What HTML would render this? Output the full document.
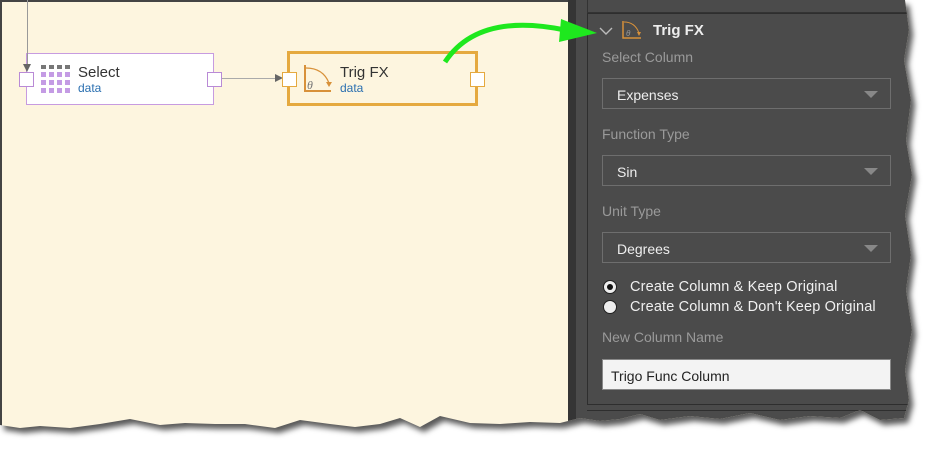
<!DOCTYPE html>
<html><head><meta charset="utf-8"><style>
*{margin:0;padding:0;box-sizing:border-box}
body{width:938px;height:458px;background:#fff;overflow:hidden;font-family:"Liberation Sans",sans-serif;position:relative}
#wrap{position:absolute;left:0;top:0;width:938px;height:458px;filter:drop-shadow(4px 5px 3px rgba(0,0,0,.65))}
#clip{position:absolute;left:0;top:0;width:938px;height:458px;background:#fdf5df;
clip-path:polygon(0 0,905px 0,909px 30px,904px 60px,911px 100px,906px 140px,912px 175px,905px 215px,911px 255px,906px 290px,912px 330px,905px 370px,909px 400px,904px 418px,880px 420px,860px 410px,840px 418px,810px 416px,780px 420px,750px 413px,720px 419px,690px 416px,660px 420px,640px 414px,620px 419px,600px 421px,580px 418px,560px 423px,530px 422px,500px 424px,470px 423px,440px 416px,420px 427px,400px 418px,380px 424px,355px 427px,330px 424px,300px 420px,275px 428px,245px 424px,215px 424px,185px 423px,160px 425px,130px 419px,100px 424px,70px 428px,40px 426px,20px 428px,0 425px)}
.abs{position:absolute}
.lbl{position:absolute;left:602px;color:#9a9a9a;font-size:14px}
.dd{position:absolute;left:602px;width:289px;height:31px;border:1px solid #6e6e6e;color:#eee;font-size:14px;padding:8px 0 0 14px}
.dd:after{content:"";position:absolute;right:12px;top:12px;border-left:7px solid transparent;border-right:7px solid transparent;border-top:7px solid #888}
.rad{position:absolute;left:603px;width:14px;height:14px;border-radius:50%;background:#eee;border:1px solid #222}
.rt{position:absolute;left:630px;color:#f0f0f0;font-size:14.5px;letter-spacing:0.15px}
</style></head><body>
<div id="wrap"><div id="clip">
<div class="abs" style="left:0;top:0;width:2px;height:458px;background:#444"></div>
<div class="abs" style="left:0;top:0;width:568px;height:2px;background:#444"></div>
<div class="abs" style="left:26px;top:53px;width:188px;height:52px;background:#fff;border:1px solid #c79be0"></div>
<div class="abs" style="left:27px;top:0;width:1px;height:64px;background:#999"></div>
<div class="abs" style="left:23px;top:64px;border-left:4px solid transparent;border-right:4px solid transparent;border-top:8px solid #666"></div>
<div class="abs" style="left:220px;top:78px;width:56px;height:1px;background:#aaa"></div>
<div class="abs" style="left:275px;top:74px;border-top:4px solid transparent;border-bottom:4px solid transparent;border-left:8px solid #666"></div>
<div class="abs" style="left:19px;top:72px;width:15px;height:15px;background:#fff;border:1px solid #b98ad6"></div>
<div class="abs" style="left:207px;top:72px;width:15px;height:15px;background:#fff;border:1px solid #b98ad6"></div>
<svg class="abs" style="left:41px;top:65px" width="29" height="29">
<g fill="#777"><rect x="0" y="0" width="5" height="4"/><rect x="8" y="0" width="5" height="4"/><rect x="16" y="0" width="5" height="4"/><rect x="24" y="0" width="5" height="4"/></g>
<g fill="#c49be4"><rect x="0" y="7" width="5" height="5"/><rect x="8" y="7" width="5" height="5"/><rect x="16" y="7" width="5" height="5"/><rect x="24" y="7" width="5" height="5"/><rect x="0" y="15" width="5" height="5"/><rect x="8" y="15" width="5" height="5"/><rect x="16" y="15" width="5" height="5"/><rect x="24" y="15" width="5" height="5"/><rect x="0" y="23" width="5" height="5"/><rect x="8" y="23" width="5" height="5"/><rect x="16" y="23" width="5" height="5"/><rect x="24" y="23" width="5" height="5"/></g></svg>
<div class="abs" style="left:78px;top:64px;font-size:15px;color:#333">Select</div>
<div class="abs" style="left:78px;top:81px;font-size:12px;color:#2a6fb0">data</div>
<div class="abs" style="left:287px;top:51px;width:191px;height:55px;background:#fdf5df;border:3px solid #e5a93f"></div>
<div class="abs" style="left:282px;top:72px;width:15px;height:15px;background:#fff;border:1px solid #e5a93f"></div>
<div class="abs" style="left:470px;top:72px;width:15px;height:15px;background:#fff;border:1px solid #e5a93f"></div>
<svg class="abs" style="left:303px;top:65px" width="30" height="28"><path d="M2 0V26H28" stroke="#d8913a" stroke-width="2" fill="none"/><path d="M3 3Q20 3 26 18" stroke="#d8913a" stroke-width="1.3" fill="none"/><path d="M23 17L26 22L29 17Z" fill="#d8913a"/><text x="4" y="24" font-size="12" font-style="italic" fill="#777" font-family="Liberation Serif">θ</text></svg>
<div class="abs" style="left:340px;top:64px;font-size:15px;color:#333">Trig FX</div>
<div class="abs" style="left:340px;top:81px;font-size:12px;color:#2a6fb0">data</div>
<div class="abs" style="left:568px;top:0;width:8px;height:458px;background:#353535"></div>
<div class="abs" style="left:576px;top:0;width:362px;height:458px;background:#4b4b4b"></div>
<div class="abs" style="left:587px;top:0;width:330px;height:13px;border:1px solid #333;border-top:none"></div>
<div class="abs" style="left:587px;top:13px;width:330px;height:392px;border:1px solid #2e2e2e"></div>
<div class="abs" style="left:587px;top:410px;width:330px;height:48px;border-top:1px solid #2e2e2e"></div>
<svg class="abs" style="left:599px;top:26px" width="14" height="10"><path d="M1 2L7 8L13 2" stroke="#bbb" stroke-width="1.4" fill="none"/></svg>
<svg class="abs" style="left:622px;top:20px" width="20" height="20"><path d="M1 1V18H19" stroke="#d8913a" stroke-width="1.5" fill="none"/><path d="M2 2Q13 2 17 13" stroke="#d8913a" stroke-width="1" fill="none"/><path d="M15 12L17 16L19 12Z" fill="#d8913a"/><text x="4" y="16" font-size="8" font-style="italic" fill="#999">θ</text></svg>
<div class="abs" style="left:653px;top:22px;font-size:15px;font-weight:bold;color:#eee">Trig FX</div>
<div class="lbl" style="top:49px">Select Column</div>
<div class="dd" style="top:78px">Expenses</div>
<div class="lbl" style="top:126px">Function Type</div>
<div class="dd" style="top:155px">Sin</div>
<div class="lbl" style="top:203px">Unit Type</div>
<div class="dd" style="top:232px">Degrees</div>
<div class="rad" style="top:280px"><div style="position:absolute;left:3px;top:3px;width:6px;height:6px;border-radius:50%;background:#111"></div></div>
<div class="rt" style="top:279px">Create Column &amp; Keep Original</div>
<div class="rad" style="top:300px"></div>
<div class="rt" style="top:299px">Create Column &amp; Don't Keep Original</div>
<div class="lbl" style="top:329px">New Column Name</div>
<div class="abs" style="left:602px;top:359px;width:289px;height:31px;background:#f3f3f3;border:1px solid #888;font-size:14px;color:#222;padding:8px 0 0 8px">Trigo Func Column</div>
</div></div>
<svg class="abs" style="left:0;top:0" width="938" height="458"><path d="M445 62Q478 12 565 30" stroke="#1ee81e" stroke-width="5" fill="none"/><path d="M561 19L597 33L559 42Z" fill="#1ee81e"/></svg>
</body></html>
